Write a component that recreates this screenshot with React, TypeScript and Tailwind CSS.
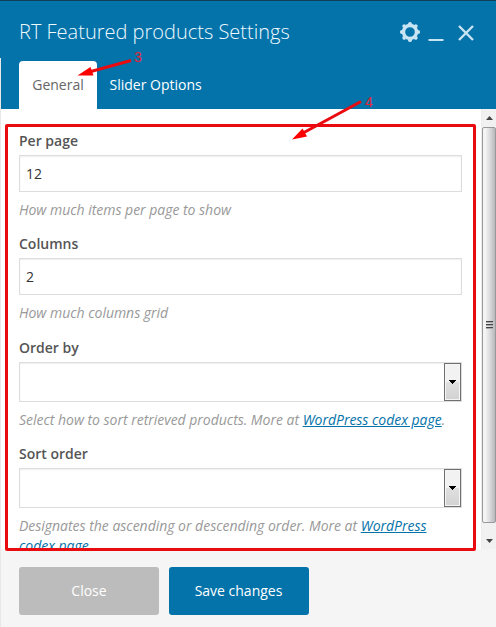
import React from "react";

const gearAngles = [0, 45, 90, 135, 180, 225, 270, 315];

function Field({ label, children, help, className = "" }: { label: string; children: React.ReactNode; help: React.ReactNode; className?: string }) {
  return (
    <div className={className}>
      <label className="block h-5 text-[14px] leading-5 font-semibold text-[#555]">{label}</label>
      <div className="mt-1">{children}</div>
      <p className="mt-2 text-[14px] leading-5 tracking-[-0.02px] text-[#999] italic">{help}</p>
    </div>
  );
}

function TextBox({ value }: { value: string }) {
  return (
    <div className="flex h-[37px] items-center border border-[#ddd] px-1.5 text-[14px] text-[#333] shadow-[inset_0_1px_2px_rgba(0,0,0,0.07)]">
      {value}
    </div>
  );
}

function SelectBox() {
  return (
    <div className="flex h-10 justify-end border border-[#ddd] shadow-[inset_0_1px_2px_rgba(0,0,0,0.07)]">
      <div className="flex h-[38px] w-[17px] items-center justify-center border border-[#707070] bg-linear-to-b from-[#f2f2f2] from-50% via-[#e0e0e0] via-51% to-[#d2d2d2] shadow-[inset_0_0_0_1px_#f5f5f5]">
        <svg width="7" height="4" viewBox="0 0 7 4" shapeRendering="crispEdges"><path d="M0 0h7v1H6v1H5v1H4v1H3V3H2V2H1V1H0z" fill="#000" /></svg>
      </div>
    </div>
  );
}

export default function App() {
  return (
    <div className="relative flex h-[627px] w-[496px] flex-col overflow-hidden bg-white font-['Open_Sans','Noto_Sans',sans-serif]">
      <header className="flex h-[109px] shrink-0 flex-col justify-between border-t border-[#123e56] bg-[#0473aa]">
        <div className="flex h-[60px] items-center pr-[21px] pl-[19px]">
          <h1 className="flex-1 pt-[2px] text-[20px] leading-7 font-light whitespace-nowrap text-[#f0faff]">RT Featured products Settings</h1>
          <svg className="mt-0.5" width="76" height="22" viewBox="0 0 76 22" fill="none" stroke="#c9e4f3">
            <circle cx="11" cy="11" r="6.500" strokeWidth="3.400" />
            {gearAngles.map((a) => (
              <circle key={a} cx="11" cy="2.800" r="1.900" fill="#c9e4f3" stroke="none" transform={`rotate(${a} 11 11)`} />
            ))}
            <path d="M29.5 19h15" strokeWidth="2" />
            <path d="m60 5 14 14m0-14L60 19" strokeWidth="2.4" />
          </svg>
        </div>
        <nav className="flex h-12 pl-[19px] text-[14px] leading-5">
          <div className="flex w-[78px] items-center justify-center rounded-t-[4px] bg-white text-[#666]">General</div>
          <div className="flex items-center px-[12.500px] text-white">Slider Options</div>
        </nav>
      </header>
      <main className="flex h-[440px] shrink-0">
        <div className="h-full w-[481px] overflow-hidden pt-[22px] pr-[19px] pl-[19px]">
          <Field label="Per page" help="How much items per page to show"><TextBox value="12" /></Field>
          <Field className="mt-[14px]" label="Columns" help="How much columns grid"><TextBox value="2" /></Field>
          <Field
            className="mt-[15px]"
            label="Order by"
            help={<>Select how to sort retrieved products. More at <a className="text-[#0473aa] underline">WordPress codex page</a>.</>}
          ><SelectBox /></Field>
          <Field
            className="mt-[14px]"
            label="Sort order"
            help={<>Designates the ascending or descending order. More at <a className="text-[#0473aa] underline">WordPress codex page</a>.</>}
          ><SelectBox /></Field>
        </div>
        <div className="flex w-[15px] flex-col border-l border-[#ececec] bg-[#f1f1f1]">
          <div className="flex h-[18px] items-center justify-center">
            <svg width="7" height="4" viewBox="0 0 7 4"><path d="M0 4 3.5 0 7 4z" fill="#444" /></svg>
          </div>
          <div className="flex h-[396px] flex-col items-center justify-center gap-px rounded-[2px] border border-[#999] bg-linear-to-r from-[#f4f4f4] from-20% via-[#dcdce0] via-55% to-[#b8b8bb]">
            <div className="h-0.5 w-[7px] border-t border-[#444] bg-[#aaa]" />
            <div className="h-0.5 w-[7px] border-t border-[#444] bg-[#aaa]" />
            <div className="h-0.5 w-[7px] border-t border-[#444] bg-[#aaa]" />
          </div>
          <div className="flex flex-1 items-center justify-center pt-2.5">
            <svg width="7" height="4" viewBox="0 0 7 4"><path d="M0 0h7L3.5 4z" fill="#444" /></svg>
          </div>
        </div>
      </main>
      <footer className="flex flex-1 gap-2.5 bg-[#f5f5f5] pt-[18px] pl-[19px] text-[14px] text-white">
        <button className="h-12 w-[140px] rounded-[3px] bg-[#bcbcbc] pb-0.5">Close</button>
        <button className="h-12 w-[140px] rounded-[3px] bg-[#0473aa] pr-px pb-0.5">Save changes</button>
      </footer>
      <div className="absolute top-[58px] left-0 h-[569px] w-px bg-[#e8e8e8]" />
      <div className="absolute top-[124px] left-[5px] h-[427px] w-[471px] rounded-[2px] border-3 border-[#e90b0f]" />
      <svg className="absolute top-0 left-0" width="496" height="150" viewBox="0 0 496 150">
        <path d="M131 60.5 90 71.8" stroke="#e90b0f" strokeWidth="3" />
        <path d="m77.500 75.500 13-8.500 3 8.500z" fill="#ff0000" />
        <path d="M361 101.500 303 133" stroke="#e90b0f" strokeWidth="3" />
        <path d="m292 139.500 10.500-11 4.500 8z" fill="#ff0000" />
        <text x="134" y="62" fontSize="14" fill="#e32639" fontFamily="Liberation Sans, sans-serif">3</text>
        <text x="365" y="107" fontSize="14" fill="#e32639" fontFamily="Liberation Sans, sans-serif">4</text>
      </svg>
    </div>
  );
}
